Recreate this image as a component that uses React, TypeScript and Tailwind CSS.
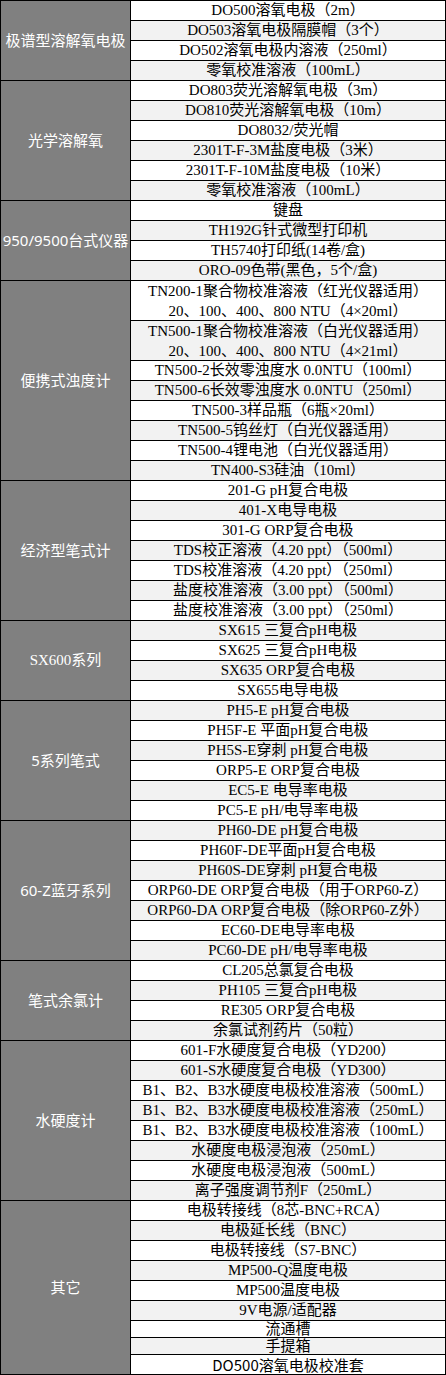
import React from 'react';

type Item = { lines: string[]; h?: string; sans?: boolean };
type Group = { name: string; items: Item[]; serif?: boolean };

const it = (text: string, h?: string): Item => ({ lines: [text], h });

const groups: Group[] = [
  {
    name: '极谱型溶解氧电极',
    items: [
      it('DO500溶氧电极（2m）'),
      it('DO503溶氧电极隔膜帽（3个）'),
      it('DO502溶氧电极内溶液（250ml）'),
      it('零氧校准溶液（100mL）'),
    ],
  },
  {
    name: '光学溶解氧',
    items: [
      it('DO803荧光溶解氧电极（3m）'),
      it('DO810荧光溶解氧电极（10m）'),
      it('DO8032/荧光帽'),
      it('2301T-F-3M盐度电极（3米）'),
      it('2301T-F-10M盐度电极（10米）'),
      it('零氧校准溶液（100mL）'),
    ],
  },
  {
    name: '950/9500台式仪器',
    items: [
      it('键盘'),
      it('TH192G针式微型打印机'),
      it('TH5740打印纸(14卷/盒)'),
      it('ORO-09色带(黑色，5个/盒)'),
    ],
  },
  {
    name: '便携式浊度计',
    items: [
      { lines: ['TN200-1聚合物校准溶液（红光仪器适用）', '20、100、400、800 NTU（4×20ml）'], h: 'h-[40px]' },
      { lines: ['TN500-1聚合物校准溶液（白光仪器适用）', '20、100、400、800 NTU（4×21ml）'], h: 'h-[40px]' },
      it('TN500-2长效零浊度水 0.0NTU（100ml）'),
      it('TN500-6长效零浊度水 0.0NTU（250ml）'),
      it('TN500-3样品瓶（6瓶×20ml）'),
      it('TN500-5钨丝灯（白光仪器适用）'),
      it('TN500-4锂电池（白光仪器适用）'),
      it('TN400-S3硅油（10ml）'),
    ],
  },
  {
    name: '经济型笔式计',
    items: [
      it('201-G pH复合电极'),
      it('401-X电导电极'),
      it('301-G ORP复合电极'),
      it('TDS校正溶液（4.20 ppt）（500ml）'),
      it('TDS校准溶液（4.20 ppt）（250ml）'),
      it('盐度校准溶液（3.00 ppt）（500ml）'),
      it('盐度校准溶液（3.00 ppt）（250ml）'),
    ],
  },
  {
    name: 'SX600系列',
    serif: true,
    items: [
      it('SX615 三复合pH电极'),
      it('SX625 三复合pH电极'),
      it('SX635 ORP复合电极'),
      it('SX655电导电极'),
    ],
  },
  {
    name: '5系列笔式',
    items: [
      it('PH5-E pH复合电极'),
      it('PH5F-E 平面pH复合电极'),
      it('PH5S-E穿刺 pH复合电极'),
      it('ORP5-E ORP复合电极'),
      it('EC5-E 电导率电极'),
      it('PC5-E pH/电导率电极'),
    ],
  },
  {
    name: '60-Z蓝牙系列',
    items: [
      it('PH60-DE pH复合电极'),
      it('PH60F-DE平面pH复合电极'),
      it('PH60S-DE穿刺 pH复合电极'),
      it('ORP60-DE ORP复合电极（用于ORP60-Z）'),
      it('ORP60-DA ORP复合电极（除ORP60-Z外）'),
      it('EC60-DE电导率电极'),
      it('PC60-DE pH/电导率电极'),
    ],
  },
  {
    name: '笔式余氯计',
    items: [
      it('CL205总氯复合电极'),
      it('PH105 三复合pH电极'),
      it('RE305 ORP复合电极'),
      it('余氯试剂药片（50粒）'),
    ],
  },
  {
    name: '水硬度计',
    items: [
      it('601-F水硬度复合电极（YD200）'),
      it('601-S水硬度复合电极（YD300）'),
      it('B1、B2、B3水硬度电极校准溶液（500mL）'),
      it('B1、B2、B3水硬度电极校准溶液（250mL）'),
      it('B1、B2、B3水硬度电极校准溶液（100mL）'),
      it('水硬度电极浸泡液（250mL）'),
      it('水硬度电极浸泡液（500mL）'),
      it('离子强度调节剂F（250mL）'),
    ],
  },
  {
    name: '其它',
    items: [
      it('电极转接线（8芯-BNC+RCA）'),
      it('电极延长线（BNC）'),
      it('电极转接线（S7-BNC）'),
      it('MP500-Q温度电极'),
      it('MP500温度电极'),
      it('9V电源/适配器'),
      it('流通槽', 'h-[17px]'),
      it('手提箱', 'h-[17px]'),
      { lines: ['DO500溶氧电极校准套'], sans: true },
    ],
  },
];

export default function App() {
  let rowIndex = 0;
  return (
    <div className="w-[446px] bg-white">
      <div className="border-t border-l border-r border-black">
        {groups.map((g) => (
          <div key={g.name} className="flex">
            {/* category cell */}
            <div
              className={`w-[130px] shrink-0 bg-[#808080] border-r border-b border-black flex items-center justify-center text-white text-[15px] ${
                g.serif
                  ? "font-['Liberation_Serif','Noto_Sans_CJK_SC',serif]"
                  : "font-['Noto_Sans','Noto_Sans_CJK_SC',sans-serif]"
              }`}
            >
              {g.name}
            </div>
            {/* item rows */}
            <div className="flex-1 flex flex-col">
              {g.items.map((item, i) => {
                const odd = rowIndex++ % 2 === 1;
                return (
                  <div
                    key={i}
                    className={`${item.h ?? 'h-[20px]'} border-b border-black flex flex-col items-center justify-center text-black text-[15px] leading-[19px] whitespace-nowrap ${
                      item.sans
                        ? "font-['Noto_Sans_CJK_SC',sans-serif]"
                        : "font-['Liberation_Serif','Noto_Sans_CJK_SC',serif]"
                    } ${odd ? 'bg-[#f2f2f2]' : 'bg-white'}`}
                  >
                    {item.lines.map((l) => (
                      <span key={l} className={item.lines.length > 1 ? 'leading-[20px]' : ''}>
                        {l}
                      </span>
                    ))}
                  </div>
                );
              })}
            </div>
          </div>
        ))}
      </div>
    </div>
  );
}
